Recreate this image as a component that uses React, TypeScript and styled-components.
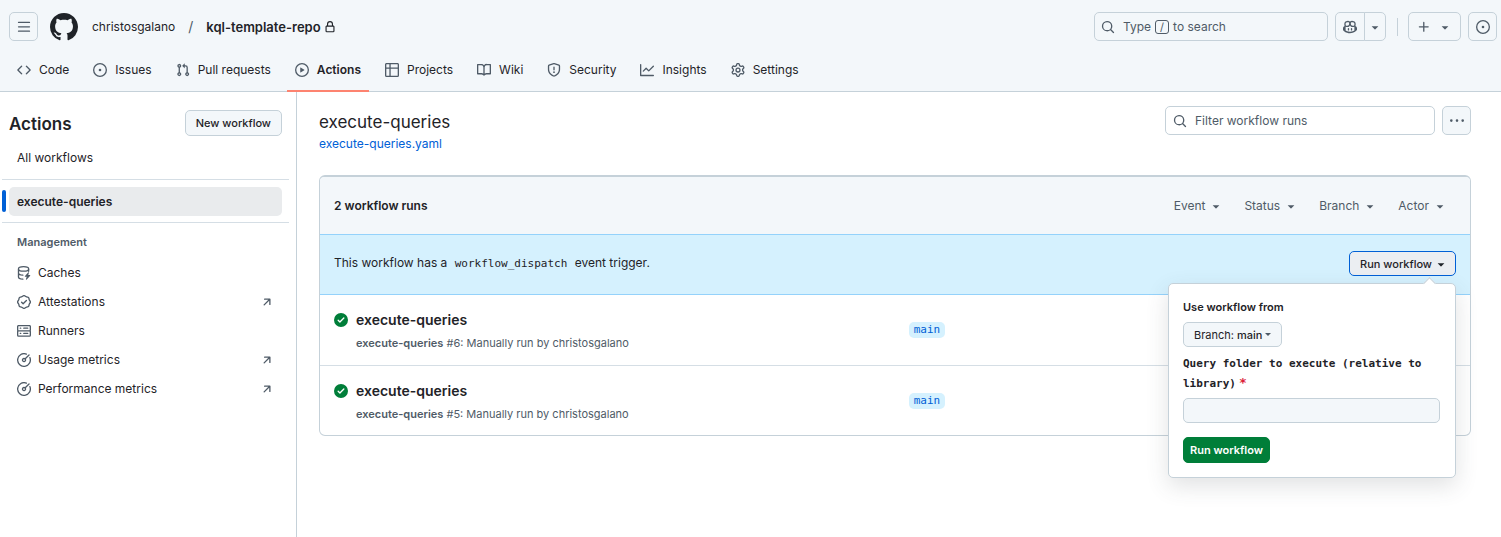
import React from "react";
import styled, { createGlobalStyle, css } from "styled-components";

const color = {
  text: "#1f2328",
  muted: "#4f5b67",
  subtle: "#f3f7fa",
  border: "#c5d1d9",
  line: "#d5dee5",
  link: "#0060d6",
  info: "#d5f1fe",
  infoLine: "#94d2fb",
  success: "#007e39",
  danger: "#dc1f3a",
  accent: "#fd8370",
};

const sans = `Inter, "Liberation Sans", sans-serif`;
const mono = `"DejaVu Sans Mono", "Liberation Mono", monospace`;

const GlobalStyle = createGlobalStyle`
  * { box-sizing: border-box; }
  body {
    margin: 0;
    background: #fff;
    color: ${color.text};
    font: 400 12px/20px ${sans};
  }
  h1, h2, h3, p, ul { margin: 0; padding: 0; }
  ul { list-style: none; }
  a { color: inherit; text-decoration: none; }
  b { font-weight: 600; }
  button, input { font: inherit; color: inherit; margin: 0; }
  button { cursor: pointer; }
`;

/* ---------- icons ---------- */

const paths = {
  bars: "M1 2.75A.75.75 0 0 1 1.75 2h12.5a.75.75 0 0 1 0 1.5H1.75A.75.75 0 0 1 1 2.75Zm0 5A.75.75 0 0 1 1.75 7h12.5a.75.75 0 0 1 0 1.5H1.75A.75.75 0 0 1 1 7.75ZM1.75 12h12.5a.75.75 0 0 1 0 1.5H1.75a.75.75 0 0 1 0-1.5Z",
  github:
    "M8 0c4.42 0 8 3.58 8 8a8.013 8.013 0 0 1-5.45 7.59c-.4.08-.55-.17-.55-.38 0-.27.01-1.13.01-2.2 0-.75-.25-1.23-.54-1.48 1.78-.2 3.65-.88 3.65-3.95 0-.88-.31-1.59-.82-2.15.08-.2.36-1.02-.08-2.12 0 0-.67-.22-2.2.82-.64-.18-1.32-.27-2-.27-.68 0-1.36.09-2 .27-1.53-1.03-2.2-.82-2.2-.82-.44 1.1-.16 1.92-.08 2.12-.51.56-.82 1.28-.82 2.15 0 3.06 1.86 3.75 3.64 3.95-.23.2-.44.55-.51 1.07-.46.21-1.61.55-2.33-.66-.15-.24-.6-.83-1.23-.82-.67.01-.27.38.01.53.34.19.73.9.82 1.13.16.45.68 1.31 2.69.94 0 .67.01 1.3.01 1.49 0 .21-.15.45-.55.38A7.995 7.995 0 0 1 0 8c0-4.42 3.58-8 8-8Z",
  lock: "M4 4a4 4 0 0 1 8 0v2h.25c.966 0 1.75.784 1.75 1.75v5.5A1.75 1.75 0 0 1 12.25 15h-8.5A1.75 1.75 0 0 1 2 13.25v-5.5C2 6.784 2.784 6 3.75 6H4Zm8.25 3.5h-8.5a.25.25 0 0 0-.25.25v5.5c0 .138.112.25.25.25h8.5a.25.25 0 0 0 .25-.25v-5.5a.25.25 0 0 0-.25-.25ZM10.5 6V4a2.5 2.5 0 1 0-5 0v2Z",
  code: "m11.28 3.22 4.25 4.25a.75.75 0 0 1 0 1.06l-4.25 4.25a.749.749 0 0 1-1.275-.326.749.749 0 0 1 .215-.734L13.94 8l-3.72-3.72a.749.749 0 0 1 .326-1.275.749.749 0 0 1 .734.215Zm-6.56 0a.751.751 0 0 1 1.042.018.751.751 0 0 1 .018 1.042L2.06 8l3.72 3.72a.749.749 0 0 1-.326 1.275.749.749 0 0 1-.734-.215L.47 8.53a.75.75 0 0 1 0-1.06Z",
  issue:
    "M8 9.5a1.5 1.5 0 1 0 0-3 1.5 1.5 0 0 0 0 3ZM8 0a8 8 0 1 1 0 16A8 8 0 0 1 8 0ZM1.5 8a6.5 6.5 0 1 0 13 0 6.5 6.5 0 0 0-13 0Z",
  pull: "M1.5 3.25a2.25 2.25 0 1 1 3 2.122v5.256a2.251 2.251 0 1 1-1.5 0V5.372A2.25 2.25 0 0 1 1.5 3.25Zm5.677-.177L9.573.677A.25.25 0 0 1 10 .854V2.5h1A2.5 2.5 0 0 1 13.5 5v5.628a2.251 2.251 0 1 1-1.5 0V5a1 1 0 0 0-1-1h-1v1.646a.25.25 0 0 1-.427.177L7.177 3.427a.25.25 0 0 1 0-.354ZM3.75 2.5a.75.75 0 1 0 0 1.5.75.75 0 0 0 0-1.5Zm0 9.5a.75.75 0 1 0 0 1.5.75.75 0 0 0 0-1.5Zm8.25.75a.75.75 0 1 0 1.5 0 .75.75 0 0 0-1.5 0Z",
  play: "M8 0a8 8 0 1 1 0 16A8 8 0 0 1 8 0ZM1.5 8a6.5 6.5 0 1 0 13 0 6.5 6.5 0 0 0-13 0Zm4.879-2.773 4.264 2.559a.25.25 0 0 1 0 .428l-4.264 2.559A.25.25 0 0 1 6 10.559V5.442a.25.25 0 0 1 .379-.215Z",
  table:
    "M0 1.75C0 .784.784 0 1.75 0h12.5C15.216 0 16 .784 16 1.75v12.5A1.75 1.75 0 0 1 14.25 16H1.75A1.75 1.75 0 0 1 0 14.25ZM6.5 6.5v8h7.75a.25.25 0 0 0 .25-.25V6.5Zm8-1.5V1.75a.25.25 0 0 0-.25-.25H6.5V5Zm-13 1.5v7.75c0 .138.112.25.25.25H5v-8ZM5 5V1.5H1.75a.25.25 0 0 0-.25.25V5Z",
  book: "M0 1.75A.75.75 0 0 1 .75 1h4.253c1.227 0 2.317.59 3 1.501A3.743 3.743 0 0 1 11.006 1h4.245a.75.75 0 0 1 .75.75v10.5a.75.75 0 0 1-.75.75h-4.507a2.25 2.25 0 0 0-1.591.659l-.622.621a.75.75 0 0 1-1.06 0l-.622-.621A2.25 2.25 0 0 0 5.258 13H.75a.75.75 0 0 1-.75-.75Zm7.251 10.324.004-5.073-.002-2.253A2.25 2.25 0 0 0 5.003 2.5H1.5v9h3.757a3.75 3.75 0 0 1 1.994.574ZM8.755 4.75l-.004 7.322a3.752 3.752 0 0 1 1.992-.572H14.5v-9h-3.495a2.25 2.25 0 0 0-2.25 2.25Z",
  shield:
    "M7.467.133a1.748 1.748 0 0 1 1.066 0l5.25 1.68A1.75 1.75 0 0 1 15 3.48V7c0 1.566-.32 3.182-1.303 4.682-.983 1.498-2.585 2.813-5.032 3.855a1.697 1.697 0 0 1-1.33 0c-2.447-1.042-4.049-2.357-5.032-3.855C1.32 10.182 1 8.566 1 7V3.48a1.75 1.75 0 0 1 1.217-1.667Zm.61 1.429a.25.25 0 0 0-.153 0l-5.25 1.68a.25.25 0 0 0-.174.238V7c0 1.358.275 2.666 1.057 3.86.784 1.194 2.121 2.34 4.366 3.297a.196.196 0 0 0 .154 0c2.245-.956 3.582-2.104 4.366-3.298C13.225 9.666 13.5 8.36 13.5 7V3.48a.251.251 0 0 0-.174-.237l-5.25-1.68ZM8.75 4.75v3a.75.75 0 0 1-1.5 0v-3a.75.75 0 0 1 1.5 0ZM9 10.5a1 1 0 1 1-2 0 1 1 0 0 1 2 0Z",
  graph:
    "M1.5 1.75V13.5h13.75a.75.75 0 0 1 0 1.5H.75a.75.75 0 0 1-.75-.75V1.75a.75.75 0 0 1 1.5 0Zm14.28 2.53-5.25 5.25a.75.75 0 0 1-1.06 0L7 7.06 4.28 9.78a.751.751 0 0 1-1.042-.018.751.751 0 0 1-.018-1.042l3.25-3.25a.75.75 0 0 1 1.06 0L10 7.94l4.72-4.72a.751.751 0 0 1 1.042.018.751.751 0 0 1 .018 1.042Z",
  gear: "M8 0a8.2 8.2 0 0 1 .701.031C9.444.095 9.99.645 10.16 1.29l.288 1.107c.018.066.079.158.212.224.231.114.454.243.668.386.123.082.233.09.299.071l1.103-.303c.644-.176 1.392.021 1.82.63.27.385.506.792.704 1.218.315.675.111 1.422-.364 1.891l-.814.806c-.049.048-.098.147-.088.294.016.257.016.515 0 .772-.01.147.038.246.088.294l.814.806c.475.469.679 1.216.364 1.891a7.977 7.977 0 0 1-.704 1.217c-.428.61-1.176.807-1.82.63l-1.102-.302c-.067-.019-.177-.011-.3.071a5.909 5.909 0 0 1-.668.386c-.133.066-.194.158-.211.224l-.29 1.106c-.168.646-.715 1.196-1.458 1.26a8.006 8.006 0 0 1-1.402 0c-.743-.064-1.289-.614-1.458-1.26l-.289-1.106c-.018-.066-.079-.158-.212-.224a5.738 5.738 0 0 1-.668-.386c-.123-.082-.233-.09-.299-.071l-1.103.303c-.644.176-1.392-.021-1.82-.63a8.12 8.12 0 0 1-.704-1.218c-.315-.675-.111-1.422.363-1.891l.815-.806c.05-.048.098-.147.088-.294a6.214 6.214 0 0 1 0-.772c.01-.147-.038-.246-.088-.294l-.815-.806C.635 6.045.431 5.298.746 4.623a7.92 7.92 0 0 1 .704-1.217c.428-.61 1.176-.807 1.82-.63l1.102.302c.067.019.177.011.3-.071.214-.143.437-.272.668-.386.133-.066.194-.158.211-.224l.29-1.106C6.009.645 6.556.095 7.299.03 7.53.01 7.764 0 8 0Zm-.571 1.525c-.036.003-.108.036-.137.146l-.289 1.105c-.147.561-.549.967-.998 1.189-.173.086-.34.183-.5.29-.417.278-.97.423-1.529.27l-1.103-.303c-.109-.03-.175.016-.195.045-.22.312-.412.644-.573.99-.014.031-.021.11.059.19l.815.806c.411.406.562.957.53 1.456a4.709 4.709 0 0 0 0 .582c.032.499-.119 1.05-.53 1.456l-.815.806c-.081.08-.073.159-.059.19.162.346.353.677.573.989.02.03.085.076.195.046l1.102-.303c.56-.153 1.113-.008 1.53.27.161.107.328.204.501.29.447.222.85.629.997 1.189l.289 1.105c.029.109.101.143.137.146a6.6 6.6 0 0 0 1.142 0c.036-.003.108-.036.137-.146l.289-1.105c.147-.561.549-.967.998-1.189.173-.086.34-.183.5-.29.417-.278.97-.423 1.529-.27l1.103.303c.109.029.175-.016.195-.045.22-.313.411-.644.573-.99.014-.031.021-.11-.059-.19l-.815-.806c-.411-.406-.562-.957-.53-1.456a4.709 4.709 0 0 0 0-.582c-.032-.499.119-1.05.53-1.456l.815-.806c.081-.08.073-.159.059-.19a6.464 6.464 0 0 0-.573-.989c-.02-.03-.085-.076-.195-.046l-1.102.303c-.56.153-1.113.008-1.53-.27a4.44 4.44 0 0 0-.501-.29c-.447-.222-.85-.629-.997-1.189l-.289-1.105c-.029-.11-.101-.143-.137-.146a6.6 6.6 0 0 0-1.142 0ZM11 8a3 3 0 1 1-6 0 3 3 0 0 1 6 0ZM9.5 8a1.5 1.5 0 1 0-3.001.001A1.5 1.5 0 0 0 9.5 8Z",
  search:
    "M10.68 11.74a6 6 0 0 1-7.922-8.982 6 6 0 0 1 8.982 7.922l3.04 3.04a.749.749 0 0 1-.326 1.275.749.749 0 0 1-.734-.215ZM11.5 7a4.499 4.499 0 1 0-8.997 0A4.499 4.499 0 0 0 11.5 7Z",
  caret:
    "m4.427 7.427 3.396 3.396a.25.25 0 0 0 .354 0l3.396-3.396A.25.25 0 0 0 11.396 7H4.604a.25.25 0 0 0-.177.427Z",
  copilot:
    "M7.998 15.035c-4.562 0-7.873-2.914-7.998-3.749V9.338c.085-.628.677-1.686 1.588-2.065.013-.07.024-.143.036-.218.029-.183.06-.384.126-.612-.201-.508-.254-1.084-.254-1.656 0-.87.128-1.769.693-2.484.579-.733 1.494-1.124 2.724-1.261 1.206-.134 2.262.034 2.944.765.05.053.096.108.139.165.044-.057.094-.112.143-.165.682-.731 1.738-.899 2.944-.765 1.23.137 2.145.528 2.724 1.261.566.715.693 1.614.693 2.484 0 .572-.053 1.148-.254 1.656.066.228.098.429.126.612.012.076.024.148.037.218.924.385 1.522 1.471 1.591 2.095v1.872c0 .766-3.351 3.795-8.002 3.795Zm0-1.485c2.28 0 4.584-1.11 5.002-1.433V7.862l-.023-.116c-.49.21-1.075.291-1.727.291-1.146 0-2.059-.327-2.71-.991A3.222 3.222 0 0 1 8 6.303a3.24 3.24 0 0 1-.544.743c-.65.664-1.563.991-2.71.991-.652 0-1.236-.081-1.727-.291l-.023.116v4.255c.419.323 2.722 1.433 5.002 1.433ZM6.762 2.83c-.193-.206-.637-.413-1.682-.297-1.019.113-1.479.404-1.713.7-.247.312-.369.789-.369 1.554 0 .793.129 1.171.308 1.371.162.181.519.379 1.442.379.853 0 1.339-.235 1.638-.54.315-.322.527-.827.617-1.553.117-.935-.037-1.395-.241-1.614Zm4.155-.297c-1.044-.116-1.488.091-1.681.297-.204.219-.359.679-.242 1.614.091.726.303 1.231.618 1.553.299.305.784.54 1.638.54.922 0 1.28-.198 1.442-.379.179-.2.308-.578.308-1.371 0-.765-.123-1.242-.37-1.554-.233-.296-.693-.587-1.713-.7ZM6.25 9.037a.75.75 0 0 1 .75.75v1.501a.75.75 0 0 1-1.5 0V9.787a.75.75 0 0 1 .75-.75Zm4.25.75v1.501a.75.75 0 0 1-1.5 0V9.787a.75.75 0 0 1 1.5 0Z",
  plus: "M7.75 2a.75.75 0 0 1 .75.75V7h4.25a.75.75 0 0 1 0 1.5H8.5v4.25a.75.75 0 0 1-1.5 0V8.5H2.75a.75.75 0 0 1 0-1.5H7V2.75A.75.75 0 0 1 7.75 2Z",
  dots: "M8 9a1.5 1.5 0 1 0 0-3 1.5 1.5 0 0 0 0 3ZM1.5 9a1.5 1.5 0 1 0 0-3 1.5 1.5 0 0 0 0 3Zm13 0a1.5 1.5 0 1 0 0-3 1.5 1.5 0 0 0 0 3Z",
  success:
    "M8 16A8 8 0 1 1 8 0a8 8 0 0 1 0 16Zm3.78-9.72a.751.751 0 0 0-.018-1.042.751.751 0 0 0-1.042-.018L6.75 9.19 5.28 7.72a.751.751 0 0 0-1.042.018.751.751 0 0 0-.018 1.042l2 2a.75.75 0 0 0 1.06 0Z",
  external:
    "M4.53 4.75A.75.75 0 0 1 5.28 4h6.01a.75.75 0 0 1 .75.75v6.01a.75.75 0 0 1-1.5 0v-4.2l-5.26 5.261a.749.749 0 0 1-1.275-.326.749.749 0 0 1 .215-.734L9.48 5.5h-4.2a.75.75 0 0 1-.75-.75Z",
  server:
    "M1.75 1h12.5c.966 0 1.75.784 1.75 1.75v4c0 .372-.116.717-.314 1 .198.283.314.628.314 1v4a1.75 1.75 0 0 1-1.75 1.75H1.75A1.75 1.75 0 0 1 0 12.75v-4c0-.358.109-.707.314-1a1.739 1.739 0 0 1-.314-1v-4C0 1.784.784 1 1.75 1ZM1.5 2.75v4c0 .138.112.25.25.25h12.5a.25.25 0 0 0 .25-.25v-4a.25.25 0 0 0-.25-.25H1.75a.25.25 0 0 0-.25.25Zm.25 5.75a.25.25 0 0 0-.25.25v4c0 .138.112.25.25.25h12.5a.25.25 0 0 0 .25-.25v-4a.25.25 0 0 0-.25-.25ZM7 4.75A.75.75 0 0 1 7.75 4h4.5a.75.75 0 0 1 0 1.5h-4.5A.75.75 0 0 1 7 4.75ZM7.75 10h4.5a.75.75 0 0 1 0 1.5h-4.5a.75.75 0 0 1 0-1.5ZM3 4.75A.75.75 0 0 1 3.75 4h.5a.75.75 0 0 1 0 1.5h-.5A.75.75 0 0 1 3 4.75ZM3.75 10h.5a.75.75 0 0 1 0 1.5h-.5a.75.75 0 0 1 0-1.5Z",
  meter:
    "M8 1.5a6.5 6.5 0 1 0 6.016 4.035.75.75 0 0 1 1.388-.57 8 8 0 1 1-4.37-4.37.75.75 0 0 1-.569 1.389A6.473 6.473 0 0 0 8 1.5Zm6.28.22a.75.75 0 0 1 0 1.06l-4.063 4.064a2.5 2.5 0 1 1-1.06-1.06L13.22 1.72a.75.75 0 0 1 1.06 0ZM7 8a1 1 0 1 0 2 0 1 1 0 0 0-2 0Z",
  verified:
    "m9.585.52.929.68c.153.112.331.186.518.215l1.138.175a2.678 2.678 0 0 1 2.24 2.24l.174 1.139c.029.187.103.365.215.518l.68.928a2.677 2.677 0 0 1 0 3.17l-.68.928a1.174 1.174 0 0 0-.215.518l-.175 1.138a2.678 2.678 0 0 1-2.241 2.241l-1.138.175a1.17 1.17 0 0 0-.518.215l-.928.68a2.677 2.677 0 0 1-3.17 0l-.928-.68a1.174 1.174 0 0 0-.518-.215L3.83 14.41a2.678 2.678 0 0 1-2.24-2.24l-.175-1.138a1.17 1.17 0 0 0-.215-.518l-.68-.928a2.677 2.677 0 0 1 0-3.17l.68-.928c.112-.153.186-.331.215-.518l.175-1.14a2.678 2.678 0 0 1 2.24-2.24l1.139-.175c.187-.029.365-.103.518-.215l.928-.68a2.677 2.677 0 0 1 3.17 0ZM7.303 1.728l-.927.68a2.67 2.67 0 0 1-1.18.489l-1.137.174a1.179 1.179 0 0 0-.987.987l-.174 1.136a2.677 2.677 0 0 1-.489 1.18l-.68.928a1.18 1.18 0 0 0 0 1.394l.68.927c.256.348.424.753.489 1.18l.174 1.137c.078.509.478.909.987.987l1.136.174a2.67 2.67 0 0 1 1.18.489l.928.68c.414.305.979.305 1.394 0l.927-.68a2.67 2.67 0 0 1 1.18-.489l1.137-.174a1.18 1.18 0 0 0 .987-.987l.174-1.136a2.67 2.67 0 0 1 .489-1.18l.68-.928a1.176 1.176 0 0 0 0-1.394l-.68-.927a2.686 2.686 0 0 1-.489-1.18l-.174-1.137a1.179 1.179 0 0 0-.987-.987l-1.136-.174a2.677 2.677 0 0 1-1.18-.489l-.928-.68a1.176 1.176 0 0 0-1.394 0ZM11.28 6.78l-3.75 3.75a.75.75 0 0 1-1.06 0L4.72 8.78a.751.751 0 0 1 .018-1.042.751.751 0 0 1 1.042-.018L7 8.94l3.22-3.22a.751.751 0 0 1 1.042.018.751.751 0 0 1 .018 1.042Z",
};

type IconName = keyof typeof paths | "cache";

const Svg = styled.svg<{ $size: number; $color?: string }>`
  display: block;
  flex: none;
  width: ${(p) => p.$size}px;
  height: ${(p) => p.$size}px;
  fill: ${(p) => p.$color ?? "currentColor"};
`;

function Icon({ name, size = 14, tint }: { name: IconName; size?: number; tint?: string }) {
  return (
    <Svg $size={size} $color={tint} viewBox="0 0 16 16" aria-hidden="true">
      {name === "cache" ? (
        <>
          <g fill="none" stroke="currentColor" strokeWidth="1.5" strokeLinecap="round">
            <ellipse cx="7.5" cy="3.3" rx="5.8" ry="2.5" />
            <path d="M1.7 3.5v9c0 1.3 2 2.4 5 2.6M13.3 3.5v2.6M1.7 8c0 1.4 2.2 2.4 5 2.5" />
          </g>
          <path d="M12.9 7.2 8.9 11.6c-.2.3 0 .6.3.6h1.9l-.9 3c-.1.5.4.7.7.4l4.2-4.5c.2-.3 0-.7-.3-.7h-2l.9-2.8c.1-.5-.5-.8-.8-.4Z" />
        </>
      ) : (
        <path fillRule="evenodd" d={paths[name]} />
      )}
    </Svg>
  );
}

/* ---------- page header ---------- */

const Page = styled.div`
  display: flex;
  flex-direction: column;
  min-height: 100vh;
`;

const Header = styled.header`
  background: ${color.subtle};
  border-bottom: 1px solid ${color.border};
`;

const TopBar = styled.div`
  display: flex;
  align-items: center;
  justify-content: space-between;
  padding: 12px 4px 0 9px;
`;

const Cluster = styled.div<{ $gap: number }>`
  display: flex;
  align-items: center;
  gap: ${(p) => p.$gap}px;
`;

const boxed = css`
  display: flex;
  align-items: center;
  justify-content: center;
  border: 1px solid ${color.border};
  border-radius: 5px;
  background: ${color.subtle};
`;

const HeaderButton = styled.button<{ $width?: number }>`
  ${boxed}
  width: ${(p) => p.$width ?? 29}px;
  height: 29px;
  padding: 0;
  gap: 7px;
  color: ${color.muted};
`;

const SplitButton = styled.div`
  display: flex;

  ${HeaderButton}:first-child {
    border-radius: 5px 0 0 5px;
  }
  ${HeaderButton}:last-child {
    margin-left: -1px;
    border-radius: 0 5px 5px 0;
  }
`;

const Crumbs = styled.nav`
  display: flex;
  align-items: center;
  gap: 13px;
  padding-left: 2px;
`;

const Slash = styled.span`
  color: ${color.muted};
  font-size: 14px;
`;

const RepoLink = styled.a`
  display: flex;
  align-items: center;
  gap: 3px;
  font-size: 13px;
  font-weight: 600;
`;

const SearchButton = styled.button`
  ${boxed}
  justify-content: flex-start;
  width: 234px;
  height: 29px;
  padding: 0 6px;
  gap: 8px;
  color: ${color.muted};
`;

const SearchHint = styled.span`
  display: flex;
  align-items: center;
  gap: 4px;
`;

const Key = styled.kbd`
  display: flex;
  align-items: center;
  justify-content: center;
  width: 14px;
  height: 14px;
  border: 1px solid ${color.muted};
  border-radius: 3px;
  font: 400 11px/12px ${sans};
`;

const Divider = styled.span`
  width: 1px;
  height: 18px;
  margin: 0 3px 0 4px;
  background: ${color.border};
`;

const Tabs = styled.nav`
  display: flex;
  gap: 8px;
  padding: 9px 9px 0;
`;

const Tab = styled.a<{ $active?: boolean }>`
  display: flex;
  align-items: center;
  gap: 8px;
  height: 42px;
  padding: 0 8px;
  margin-bottom: -1px;
  border-bottom: 2px solid ${(p) => (p.$active ? color.accent : "transparent")};
  font-weight: ${(p) => (p.$active ? 600 : 400)};

  svg {
    color: ${color.muted};
  }
`;

/* ---------- sidebar ---------- */

const Body = styled.div`
  display: flex;
  flex: 1;
`;

const Sidebar = styled.aside`
  flex: none;
  width: 297px;
  padding: 18px 7px 18px 2px;
  border-right: 1px solid ${color.border};
`;

const SidebarHead = styled.div`
  display: flex;
  align-items: center;
  justify-content: space-between;
  padding: 0 7px;
`;

const SidebarTitle = styled.h2`
  padding-top: 2px;
  font-size: 17px;
  line-height: 24px;
  font-weight: 600;
`;

const SmallButton = styled.button<{ $focused?: boolean; $primary?: boolean; $light?: boolean }>`
  ${boxed}
  height: 26px;
  padding: 0 10px;
  font-size: 11px;
  line-height: 18px;
  font-weight: 500;

  ${(p) =>
    p.$light &&
    css`
      height: 25px;
      gap: 3px;
      font-weight: 400;

      b {
        font-weight: 500;
      }
    `}
  ${(p) =>
    p.$focused &&
    css`
      height: 25px;
      border-color: ${color.link};
      background: #ebeef2;
      padding-right: 7px;
      gap: 2px;
    `}
  ${(p) =>
    p.$primary &&
    css`
      border-color: ${color.success};
      background: ${color.success};
      color: #fff;
      padding: 0 6px;
      font-weight: 600;
    `}
`;

const SmallCaret = styled.span`
  border: solid transparent;
  border-width: 3px 3px 0;
  border-top-color: ${color.muted};
`;

const SideList = styled.ul<{ $divided?: boolean }>`
  padding: 7px;
  ${(p) =>
    p.$divided &&
    css`
      padding-bottom: 6px;
      border-top: 1px solid ${color.line};
      border-bottom: 1px solid ${color.line};
    `}
`;

const SideLink = styled.a<{ $current?: boolean }>`
  position: relative;
  display: flex;
  align-items: center;
  gap: 7px;
  height: 29px;
  padding: 0 8px;
  border-radius: 5px;
  color: ${color.text};

  svg {
    color: ${color.muted};
  }

  ${(p) =>
    p.$current &&
    css`
      background: #e9ebed;
      font-weight: 600;

      &::before {
        content: "";
        position: absolute;
        top: 3px;
        left: -7px;
        width: 4px;
        height: 22px;
        border-radius: 2px;
        background: ${color.link};
      }
    `}
`;

const SideLabel = styled.span`
  flex: 1;
`;

const SideHeading = styled.h3`
  padding: 10px 15px 0;
  font-size: 11px;
  line-height: 18px;
  font-weight: 600;
  color: ${color.muted};
`;

/* ---------- main column ---------- */

const Main = styled.main`
  flex: 1;
  min-width: 0;
  padding: 14px 30px 30px 22px;
`;

const MainHead = styled.div`
  display: flex;
  align-items: flex-start;
  justify-content: space-between;
  padding-bottom: 21px;
`;

const Title = styled.h1`
  padding-top: 4px;
  font-size: 17px;
  line-height: 24px;
  font-weight: 400;
`;

const FileLink = styled.a`
  display: block;
  color: ${color.link};
`;

const FilterBox = styled.label`
  display: flex;
  align-items: center;
  gap: 8px;
  width: 270px;
  height: 29px;
  padding: 0 7px;
  border: 1px solid ${color.border};
  border-radius: 5px;
  color: ${color.muted};
`;

const FilterInput = styled.input`
  flex: 1;
  min-width: 0;
  padding: 0;
  border: 0;
  outline: 0;
  background: none;

  &::placeholder {
    color: ${color.muted};
    opacity: 1;
  }
`;

const Card = styled.section`
  border: 1px solid ${color.border};
  border-top-width: 2px;
  border-radius: 6px;
`;

const CardHead = styled.div`
  display: flex;
  align-items: center;
  justify-content: space-between;
  height: 57px;
  padding: 0 23px 0 14px;
  border-radius: 4px 4px 0 0;
  background: ${color.subtle};
`;

const CardTitle = styled.h2`
  font-size: 12px;
  line-height: 20px;
  font-weight: 600;
`;

const FilterMenu = styled.button`
  display: flex;
  align-items: center;
  gap: 4px;
  padding: 0;
  border: 0;
  background: none;
  color: ${color.muted};
`;

const Notice = styled.div`
  display: flex;
  align-items: center;
  justify-content: space-between;
  height: 61px;
  padding: 0 14px 2px;
  border-top: 1px solid ${color.infoLine};
  border-bottom: 1px solid ${color.infoLine};
  background: ${color.info};
`;

const Code = styled.code`
  padding: 0 4px;
  font: 400 11px/20px ${mono};
`;

const Run = styled.div`
  display: grid;
  grid-template-columns: 21fr 20fr;
  align-items: center;
  height: 70px;
  padding: 0 14px;

  & + & {
    border-top: 1px solid ${color.line};
  }
`;

const RunInfo = styled.div`
  display: grid;
  grid-template-columns: 14px 1fr;
  align-items: center;
  column-gap: 8px;
  padding-top: 2px;
`;

const RunTitle = styled.a`
  font-size: 14px;
  line-height: 24px;
  font-weight: 600;
`;

const RunMeta = styled.p`
  grid-column: 2;
  font-size: 11px;
  line-height: 22px;
  color: ${color.muted};
`;

const BranchTag = styled.a`
  justify-self: start;
  padding: 0 5px;
  border-radius: 5px;
  background: ${color.info};
  color: ${color.link};
  font: 400 11px/16px ${mono};
`;

/* ---------- dispatch popover ---------- */

const Anchor = styled.div`
  position: relative;
`;

const Popover = styled.form`
  position: absolute;
  z-index: 1;
  top: calc(100% + 7px);
  right: 0;
  width: 288px;
  padding: 14px 15px 14px 14px;
  border: 1px solid ${color.border};
  border-radius: 5px;
  background: #fff;
  box-shadow: 0 8px 22px rgba(66, 74, 83, 0.16);

  &::before {
    content: "";
    position: absolute;
    top: -5px;
    right: 21px;
    width: 8px;
    height: 8px;
    background: #fff;
    border: solid ${color.border};
    border-width: 1px 0 0 1px;
    transform: rotate(45deg);
  }
`;

const PopoverTitle = styled.p`
  padding-bottom: 5px;
  font-size: 11px;
  line-height: 19px;
  font-weight: 600;
`;

const FieldLabel = styled.label`
  display: block;
  padding: 7px 0 5px;
  font: 700 11px/19px ${mono};
`;

const Required = styled.span`
  padding-left: 3px;
  color: ${color.danger};
  font-size: 13px;
`;

const TextInput = styled.input`
  display: block;
  width: 100%;
  height: 25px;
  margin-bottom: 14px;
  padding: 0 8px;
  border: 1px solid ${color.border};
  border-radius: 5px;
  background: ${color.subtle};
`;

const tabs: { icon: IconName; label: string }[] = [
  { icon: "code", label: "Code" },
  { icon: "issue", label: "Issues" },
  { icon: "pull", label: "Pull requests" },
  { icon: "play", label: "Actions" },
  { icon: "table", label: "Projects" },
  { icon: "book", label: "Wiki" },
  { icon: "shield", label: "Security" },
  { icon: "graph", label: "Insights" },
  { icon: "gear", label: "Settings" },
];

const management: { icon: IconName; label: string; external?: boolean }[] = [
  { icon: "cache", label: "Caches" },
  { icon: "verified", label: "Attestations", external: true },
  { icon: "server", label: "Runners" },
  { icon: "meter", label: "Usage metrics", external: true },
  { icon: "meter", label: "Performance metrics", external: true },
];

const runs = [6, 5];

export default function App() {
  return (
    <Page>
      <GlobalStyle />
      <Header>
        <TopBar>
          <Cluster $gap={12}>
            <HeaderButton type="button" aria-label="Open navigation">
              <Icon name="bars" />
            </HeaderButton>
            <a href="#home" aria-label="Homepage">
              <Icon name="github" size={28} />
            </a>
            <Crumbs aria-label="Breadcrumb">
              <a href="#owner">christosgalano</a>
              <Slash>/</Slash>
              <RepoLink href="#repo">
                kql-template-repo <Icon name="lock" size={12} />
              </RepoLink>
            </Crumbs>
          </Cluster>
          <Cluster $gap={7}>
            <SearchButton type="button">
              <Icon name="search" />
              <SearchHint>
                Type <Key>/</Key> to search
              </SearchHint>
            </SearchButton>
            <SplitButton>
              <HeaderButton type="button" $width={30} aria-label="Chat with Copilot">
                <Icon name="copilot" />
              </HeaderButton>
              <HeaderButton type="button" $width={22} aria-label="Copilot menu">
                <Icon name="caret" />
              </HeaderButton>
            </SplitButton>
            <Divider />
            <HeaderButton type="button" $width={53} aria-label="Create new">
              <Icon name="plus" />
              <Icon name="caret" />
            </HeaderButton>
            <HeaderButton type="button" aria-label="Your issues">
              <Icon name="issue" />
            </HeaderButton>
          </Cluster>
        </TopBar>
        <Tabs aria-label="Repository">
          {tabs.map((t) => (
            <Tab key={t.label} href={`#${t.label}`} $active={t.label === "Actions"}>
              <Icon name={t.icon} />
              {t.label}
            </Tab>
          ))}
        </Tabs>
      </Header>

      <Body>
        <Sidebar>
          <SidebarHead>
            <SidebarTitle>Actions</SidebarTitle>
            <SmallButton type="button">New workflow</SmallButton>
          </SidebarHead>
          <SideList>
            <li>
              <SideLink href="#all">All workflows</SideLink>
            </li>
          </SideList>
          <SideList $divided>
            <li>
              <SideLink href="#execute-queries" $current aria-current="page">
                execute-queries
              </SideLink>
            </li>
          </SideList>
          <SideHeading>Management</SideHeading>
          <SideList>
            {management.map((m) => (
              <li key={m.label}>
                <SideLink href={`#${m.label}`}>
                  <Icon name={m.icon} />
                  <SideLabel>{m.label}</SideLabel>
                  {m.external && <Icon name="external" />}
                </SideLink>
              </li>
            ))}
          </SideList>
        </Sidebar>

        <Main>
          <MainHead>
            <div>
              <Title>execute-queries</Title>
              <FileLink href="#yaml">execute-queries.yaml</FileLink>
            </div>
            <Cluster $gap={7}>
              <FilterBox>
                <Icon name="search" />
                <FilterInput aria-label="Filter workflow runs" placeholder="Filter workflow runs" />
              </FilterBox>
              <HeaderButton type="button" aria-label="Show workflow options">
                <Icon name="dots" />
              </HeaderButton>
            </Cluster>
          </MainHead>

          <Card>
            <CardHead>
              <CardTitle>2 workflow runs</CardTitle>
              <Cluster $gap={21}>
                {["Event", "Status", "Branch", "Actor"].map((f) => (
                  <FilterMenu key={f} type="button">
                    {f}
                    <Icon name="caret" />
                  </FilterMenu>
                ))}
              </Cluster>
            </CardHead>

            <Notice>
              <p>
                This workflow has a <Code>workflow_dispatch</Code> event trigger.
              </p>
              <Anchor>
                <SmallButton type="button" $focused aria-expanded="true">
                  Run workflow
                  <Icon name="caret" />
                </SmallButton>
                <Popover>
                  <PopoverTitle>Use workflow from</PopoverTitle>
                  <SmallButton type="button" $light>
                    <span>
                      Branch: <b>main</b>
                    </span>
                    <SmallCaret />
                  </SmallButton>
                  <FieldLabel htmlFor="folder">
                    Query folder to execute (relative to library)
                    <Required>*</Required>
                  </FieldLabel>
                  <TextInput id="folder" required />
                  <SmallButton type="submit" $primary>
                    Run workflow
                  </SmallButton>
                </Popover>
              </Anchor>
            </Notice>

            {runs.map((n) => (
              <Run key={n}>
                <RunInfo>
                  <Icon name="success" tint={color.success} />
                  <RunTitle href={`#run-${n}`}>execute-queries</RunTitle>
                  <RunMeta>
                    <b>execute-queries</b> #{n}: Manually run by christosgalano
                  </RunMeta>
                </RunInfo>
                <BranchTag href="#main">main</BranchTag>
              </Run>
            ))}
          </Card>
        </Main>
      </Body>
    </Page>
  );
}
